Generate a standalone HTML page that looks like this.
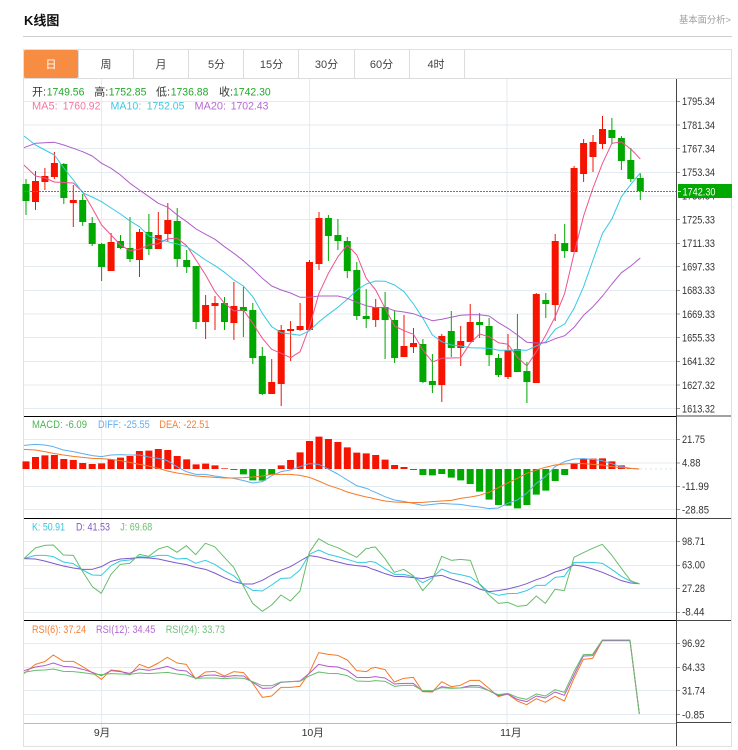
<!DOCTYPE html>
<html lang="zh">
<head>
<meta charset="utf-8">
<title>K线图</title>
<style>
html,body{margin:0;padding:0;background:#fff;width:738px;height:750px;overflow:hidden}
svg{display:block;font-family:"Liberation Sans","Noto Sans CJK SC",sans-serif}
polyline{fill:none;stroke-width:1;vector-effect:non-scaling-stroke;stroke-linejoin:round}
.ax text{font-size:11px;fill:#333}
.lg{font-size:11px}
.tab{font-size:11px;fill:#444;text-anchor:middle}
</style>
</head>
<body>
<svg width="738" height="750" viewBox="0 0 738 750" xmlns="http://www.w3.org/2000/svg">
<rect width="738" height="750" fill="#fff"/>
<text x="24" y="25" font-size="13" font-weight="bold" fill="#111">K线图</text>
<text x="679" y="23" font-size="9.5" fill="#a0a0a0" textLength="52" lengthAdjust="spacingAndGlyphs">基本面分析&gt;</text>
<path d="M23 36.5H732" stroke="#cfcfcf" fill="none"/>

<!-- frame -->
<rect x="23.5" y="49.5" width="708" height="697" fill="none" stroke="#e0e0e0"/>
<rect x="24" y="50" width="54" height="28" rx="1.5" fill="#f68d42"/>
<path d="M24 78.5H731.5M78.5 50V78M133.5 50V78M188.5 50V78M243.5 50V78M298.5 50V78M354.5 50V78M409.5 50V78M464.5 50V78" stroke="#dcdcdc" fill="none"/>
<text class="tab" x="51" y="68" style="fill:#fff">日</text>
<text class="tab" x="106" y="68">周</text>
<text class="tab" x="161" y="68">月</text>
<text class="tab" x="216.5" y="68">5分</text>
<text class="tab" x="271.5" y="68">15分</text>
<text class="tab" x="326.5" y="68">30分</text>
<text class="tab" x="381.5" y="68">60分</text>
<text class="tab" x="436" y="68">4时</text>

<!-- grid -->
<path stroke="#e4ebf1" fill="none" d="M24 101.5H676M24 125H676M24 148.5H676M24 172.5H676M24 196H676M24 219.5H676M24 243.5H676M24 266.5H676M24 290.5H676M24 314H676M24 337.5H676M24 361.5H676M24 385H676M24 408.5H676
M24 439.5H676M24 463H676M24 486.5H676M24 509.5H676
M24 541.5H676M24 565.5H676M24 588.5H676M24 612.5H676
M24 643.5H676M24 667.5H676M24 690.5H676M24 714.5H676
M101.5 79V727M309.5 79V727M507 79V727"/>

<!-- candles: wicks -->
<path stroke="#00a800" stroke-width="1" fill="none" d="M26 179V215M63.8 163V204M82.7 194V226M92.2 217V246M101.6 243V281M120.5 235V249M130 217V262M148.9 214V255M177.2 208V267M186.7 250V273M196.1 266V329M224.5 297V330M243.4 287V337M252.8 303V364M262.3 347V395M328.4 215V261M337.9 219V250M347.3 237V278M356.8 262V320M366.2 289V328M385.1 292V359M394.6 310V363M422.9 339V383M432.4 354V393M451.3 311V357M479.6 313V338M489.1 318V366M498.5 354V377M517.4 314V372M526.9 362V403M545.8 293V318M564.7 224V258M611.9 118V144M621.4 136V170M630.8 148V182M640.3 173V200"/>
<path stroke="#f61400" stroke-width="1" fill="none" d="M35.5 171V210M44.9 168V190M54.4 152V179M73.3 185V227M111.1 233V271M139.5 229V277M158.3 212V249M167.8 203V242M205.6 295V339M215 296V330M233.9 282V340M271.7 359V394M281.2 325V406M290.6 321V361M300.1 303V331M309.5 260V330M319 212V270M375.7 299V327M404 315V357M413.5 328V353M441.8 334V402M460.7 326V366M470.2 304V342M508 334V379M536.3 293V383M555.2 234V321M574.1 166V252M583.6 139V182M593 135V172M602.5 116V149"/>
<!-- candles: bodies -->
<path fill="#00a800" d="M22.5 184h7V201h-7zM60.3 164h7V198h-7zM79.2 200h7V222h-7zM88.7 223h7V244h-7zM98.1 244h7V267h-7zM117 241h7V248h-7zM126.5 248h7V259h-7zM145.4 232h7V249h-7zM173.7 221h7V259h-7zM183.2 260h7V267h-7zM192.6 266h7V322h-7zM221 303h7V322h-7zM239.9 307h7V311h-7zM249.3 310h7V358h-7zM258.8 356h7V394h-7zM324.9 218h7V236h-7zM334.4 235h7V241h-7zM343.8 241h7V271h-7zM353.3 270h7V316h-7zM362.7 316h7V319h-7zM381.6 307h7V320h-7zM391.1 320h7V358h-7zM419.4 344h7V382h-7zM428.9 381h7V385h-7zM447.8 331h7V348h-7zM476.1 322h7V325h-7zM485.6 326h7V355h-7zM495 358h7V375h-7zM513.9 349h7V372h-7zM523.4 371h7V382h-7zM542.3 300h7V304h-7zM561.2 243h7V251h-7zM608.4 130h7V138h-7zM617.9 138h7V161h-7zM627.3 160h7V179h-7zM636.8 178h7V191h-7z"/>
<path fill="#f61400" d="M32 181h7V202h-7zM41.4 176h7V182h-7zM50.9 163h7V177h-7zM69.8 200h7V203h-7zM107.6 242h7V271h-7zM136 232h7V260h-7zM154.8 235h7V249h-7zM164.3 220h7V234h-7zM202.1 305h7V322h-7zM211.5 303h7V306h-7zM230.4 306h7V323h-7zM268.2 382h7V394h-7zM277.7 330h7V384h-7zM287.1 329h7V331h-7zM296.6 326h7V330h-7zM306 262h7V330h-7zM315.5 218h7V264h-7zM372.2 307h7V320h-7zM400.5 346h7V357h-7zM410 343h7V347h-7zM438.3 336h7V385h-7zM457.2 341h7V348h-7zM466.7 322h7V342h-7zM504.5 350h7V377h-7zM532.8 294h7V383h-7zM551.7 241h7V305h-7zM570.6 168h7V252h-7zM580.1 143h7V174h-7zM589.5 142h7V157h-7zM599 129h7V144h-7z"/>

<!-- MA lines -->
<polyline stroke="#f0528f" points="24,165 26,167 35.5,176 44.9,178 54.4,182 63.8,182.5 73.3,183 82.7,192 92.2,208 101.6,225 111.1,235 120.5,245 130,250.7 139.4,249.3 148.9,245 158.3,243.7 167.8,238.7 177.2,238.3 186.7,245.7 196.1,260 205.6,275 215,291.7 224.5,303.3 233.9,311 243.4,310 252.8,323.3 262.3,338.3 271.7,349.3 281.2,353.3 290.6,357.7 300.1,351.7 309.5,326.7 319,293.3 328.4,273.3 337.9,256.7 347.3,245 356.8,255 366.2,278.3 375.7,290 385.1,308.3 394.6,326 404,330.7 413.5,334.3 422.9,350 432.4,362 441.8,358.3 451.3,358 460.7,357.7 470.2,343.3 479.6,334 489.1,336.7 498.5,342.7 508,344.3 517.4,357.3 526.9,366 536.3,351.7 545.8,335 555.2,316.7 564.7,293.3 574.1,253.3 583.6,216 593,188 602.5,163.3 611.9,143.3 621.4,142 630.8,149 640.3,159"/>
<polyline stroke="#36c9e2" points="24,136 35.5,145 44.9,150 54.4,155 63.8,168 73.3,180 82.7,192.7 92.2,197 101.6,201.7 111.1,208 120.5,214 130,221 139.4,226.7 148.9,236 158.3,239.3 167.8,241.7 177.2,244 186.7,246.7 196.1,253.3 205.6,260 215,265.7 224.5,272.3 233.9,280 243.4,286 252.8,296.7 262.3,313.3 271.7,326.7 281.2,332.7 290.6,334 300.1,335.3 309.5,330.7 319,321.7 328.4,314.3 337.9,307.3 347.3,299.3 356.8,290 366.2,284 375.7,281 385.1,281.3 394.6,285 404,291.7 413.5,304 422.9,318.3 432.4,335 441.8,341.7 451.3,345 460.7,346 470.2,347.7 479.6,348 489.1,348.3 498.5,350.3 508,350.3 517.4,350 526.9,350.3 536.3,346 545.8,341.7 555.2,329.3 564.7,324 574.1,308.3 583.6,286.7 593,260 602.5,233.3 611.9,219 621.4,196.7 630.8,184.3 640.3,173"/>
<polyline stroke="#b05ccb" points="24,147.7 35.5,143.3 44.9,142.7 54.4,142.3 63.8,145 73.3,148.3 82.7,151.7 92.2,156 101.6,163.3 111.1,168.3 120.5,175 130,183.3 139.4,190 148.9,196.7 158.3,203.3 167.8,207.3 177.2,215 186.7,221.7 196.1,229 205.6,234.3 215,239.3 224.5,246.7 233.9,253.3 243.4,260.7 252.8,269 262.3,278.3 271.7,286 281.2,290 290.6,293 300.1,297.3 309.5,297.3 319,296 328.4,296 337.9,296 347.3,298.3 356.8,302.3 366.2,305.7 375.7,307.7 385.1,307.3 394.6,310.7 404,312 413.5,313.7 422.9,317.3 432.4,320.7 441.8,319.3 451.3,317.3 460.7,315.3 470.2,314.7 479.6,314.7 489.1,316 498.5,322.7 508,328.3 517.4,335 526.9,342.3 536.3,343 545.8,342.7 555.2,338.7 564.7,335.7 574.1,327.3 583.6,315.3 593,306.7 602.5,296 611.9,284 621.4,272.7 630.8,266 640.3,258"/>

<!-- current price line -->
<path d="M24 191.5H676" stroke="#2fa82f" stroke-dasharray="2 1" fill="none"/>

<!-- legends main -->
<g class="lg" fill="#333">
<text x="32" y="95.5" font-size="11">开:</text>
<text x="94.3" y="95.5" font-size="11">高:</text>
<text x="156" y="95.5" font-size="11">低:</text>
<text x="219" y="95.5" font-size="11">收:</text>
</g>
<g class="lg" fill="#22a82a">
<text x="46.7" y="95.5" textLength="37.7" lengthAdjust="spacingAndGlyphs">1749.56</text>
<text x="108.7" y="95.5" textLength="37.7" lengthAdjust="spacingAndGlyphs">1752.85</text>
<text x="170.7" y="95.5" textLength="37.7" lengthAdjust="spacingAndGlyphs">1736.88</text>
<text x="233" y="95.5" textLength="37.7" lengthAdjust="spacingAndGlyphs">1742.30</text>
</g>
<g class="lg">
<text x="32" y="109.5" fill="#f5759f" textLength="25.7" lengthAdjust="spacingAndGlyphs">MA5:</text>
<text x="62.7" y="109.5" fill="#f5759f" textLength="37.7" lengthAdjust="spacingAndGlyphs">1760.92</text>
<text x="110.5" y="109.5" fill="#3cc8e2" textLength="30.8" lengthAdjust="spacingAndGlyphs">MA10:</text>
<text x="146.7" y="109.5" fill="#3cc8e2" textLength="37.7" lengthAdjust="spacingAndGlyphs">1752.05</text>
<text x="194.5" y="109.5" fill="#b669d2" textLength="31.5" lengthAdjust="spacingAndGlyphs">MA20:</text>
<text x="230.7" y="109.5" fill="#b669d2" textLength="37.7" lengthAdjust="spacingAndGlyphs">1702.43</text>
</g>

<!-- MACD bars -->
<g transform="translate(0,415) scale(1,.33333)">
<path fill="#f61400" d="M22.5 139h7V162h-7zM32 126h7V162h-7zM41.4 121h7V162h-7zM50.9 120h7V162h-7zM60.3 132h7V162h-7zM69.8 135h7V162h-7zM79.2 144h7V162h-7zM88.7 147h7V162h-7zM98.1 145h7V162h-7zM107.6 133h7V162h-7zM117 128h7V162h-7zM126.5 123h7V162h-7zM135.9 108h7V162h-7zM145.4 107h7V162h-7zM154.8 102h7V162h-7zM164.3 105h7V162h-7zM173.7 123h7V162h-7zM183.2 133h7V162h-7zM192.6 148h7V162h-7zM202.1 146h7V162h-7zM211.5 151h7V162h-7zM221 160h7V162h-7zM277.7 151h7V162h-7zM287.1 135h7V162h-7zM296.6 112h7V162h-7zM306 78h7V162h-7zM315.5 65h7V162h-7zM324.9 72h7V162h-7zM334.4 81h7V162h-7zM343.8 97h7V162h-7zM353.3 113h7V162h-7zM362.7 115h7V162h-7zM372.2 120h7V162h-7zM381.6 134h7V162h-7zM391.1 150h7V162h-7zM400.5 156h7V162h-7zM570.6 144h7V162h-7zM580.1 132h7V162h-7zM589.5 131h7V162h-7zM599 130h7V162h-7zM608.4 139h7V162h-7zM617.9 151h7V162h-7zM627.3 159h7V162h-7z"/>
<path fill="#00a800" d="M230.4 162h7V165h-7zM239.9 162h7V178h-7zM249.3 162h7V196h-7zM258.8 162h7V197h-7zM268.2 162h7V179h-7zM410 162h7V165h-7zM419.4 162h7V180h-7zM428.9 162h7V181h-7zM438.3 162h7V177h-7zM447.8 162h7V188h-7zM457.2 162h7V196h-7zM466.7 162h7V207h-7zM476.1 162h7V230h-7zM485.6 162h7V254h-7zM495 162h7V270h-7zM504.5 162h7V272h-7zM513.9 162h7V280h-7zM523.4 162h7V270h-7zM532.8 162h7V239h-7zM542.3 162h7V227h-7zM551.7 162h7V198h-7zM561.2 162h7V180h-7z"/>
</g>
<path d="M640 469H676" stroke="#cfe6f2" stroke-dasharray="2 3" fill="none"/>

<g transform="translate(0,415) scale(.33333)">
<polyline stroke="#5dafef" points="72,91 106,88 134,90 160,95 190,105 220,110 248,116 277,122 304,125 333,120 361,119 389,120 418,120 446,126 475,130 502,137 531,155 559,170 587,178 616,178 644,183 673,187 701,190 731,197 758,204 787,200 815,182 843,170 871,165 900,155 928,146 956,148 985,162 1013,177 1042,195 1070,212 1099,220 1110,224"/>
<polyline stroke="#f57a28" points="72,103 106,105 134,110 160,115 190,120 220,124 248,127 277,130 304,131 333,133 361,137 389,142 418,148 446,153 475,160 502,168 531,174 559,178 587,183 616,185 644,187 673,189 701,189 731,188 758,186 787,183 815,178 843,178 871,178 900,181 928,187 956,198 985,211 1013,220 1042,231 1070,239 1099,246 1110,248"/>
</g>
<g transform="translate(370,415) scale(.33333)">
<polyline stroke="#5dafef" points="0,226 16,232 45,245 73,255 101,259 130,265 158,271 187,268 215,265 244,267 271,268 301,273 328,276 357,281 385,279 413,265 442,255 470,235 499,205 526,185 555,155 583,140 612,132 640,131 668,133 697,137 725,146 754,155 782,160 808,162"/>
<polyline stroke="#f57a28" points="0,248 16,252 45,258 73,261 101,262 130,263 158,262 187,260 215,258 244,256 271,250 301,246 328,241 357,232 385,218 413,204 442,190 470,175 499,165 526,157 555,150 583,147 612,145 640,146 668,148 697,150 725,155 754,158 782,160 808,162"/>
</g>

<!-- KDJ -->
<g transform="translate(0,515) scale(.33333)">
<polyline stroke="#36c9e2" points="72,131 106,121 134,121 160,125 190,141 220,146 248,165 277,180 304,181 333,152 361,138 389,135 418,125 446,127 475,121 502,121 531,132 559,130 587,145 616,136 644,148 673,167 701,182 731,210 758,226 787,228 815,210 843,190 871,189 900,165 928,118 956,105 985,118 1013,125 1042,133 1070,142 1099,142 1110,139"/>
<polyline stroke="#7d59c9" points="72,131 106,132 134,138 160,145 190,153 220,159 248,163 277,163 304,155 333,139 361,132 389,130 418,128 446,129 475,132 502,138 531,144 559,149 587,157 616,163 644,174 673,188 701,200 731,207 758,207 787,196 815,180 843,166 871,155 900,138 928,122 956,126 985,134 1013,141 1042,148 1070,152 1099,155 1110,159"/>
<polyline stroke="#68bd6c" points="72,131 106,99 134,91 160,90 190,120 220,121 248,170 277,215 304,235 333,178 361,148 389,145 418,118 446,124 475,102 502,94 531,112 559,92 587,119 616,85 644,95 673,127 701,157 731,215 758,265 787,289 815,270 843,240 871,258 900,228 928,112 956,71 985,88 1013,98 1042,113 1070,127 1099,100 1110,100"/>
</g>
<g transform="translate(370,515) scale(.33333)">
<polyline stroke="#36c9e2" points="0,139 16,142 45,161 73,178 101,178 130,185 158,203 187,188 215,162 244,174 271,179 301,186 328,206 357,232 385,241 413,236 442,235 470,227 499,211 526,211 555,187 583,184 612,142 640,142 668,142 697,145 725,163 754,184 782,199 808,206"/>
<polyline stroke="#7d59c9" points="0,160 16,165 45,176 73,184 101,185 130,188 158,191 187,184 215,181 244,192 271,200 301,209 328,222 357,230 385,227 413,222 442,215 470,206 499,194 526,185 555,171 583,163 612,150 640,154 668,162 697,172 725,184 754,197 782,204 808,206"/>
<polyline stroke="#68bd6c" points="0,98 16,96 45,131 73,172 101,163 130,182 158,227 187,194 215,124 244,136 271,133 301,136 328,207 357,240 385,265 413,262 442,274 470,271 499,243 526,265 555,223 583,227 612,127 640,113 668,100 697,88 725,120 754,160 782,197 808,207"/>
</g>

<!-- RSI -->
<g transform="translate(0,620) scale(.33333)">
<polyline stroke="#f57a28" points="72,161 106,133 134,125 160,105 190,124 220,124 248,140 277,158 304,178 333,150 361,153 389,165 418,133 446,144 475,129 502,112 531,129 559,133 587,177 616,156 644,154 673,168 701,155 731,158 758,190 787,232 815,228 843,202 871,202 900,199 928,158 956,98 985,103 1013,106 1042,120 1070,152 1099,155 1110,148"/>
<polyline stroke="#b05ccb" points="72,152 106,141 134,137 160,129 190,139 220,141 248,148 277,157 304,167 333,152 361,155 389,160 418,147 446,151 475,146 502,139 531,150 559,153 587,175 616,166 644,165 673,171 701,167 731,168 758,187 787,205 815,204 843,187 871,185 900,183 928,160 956,133 985,139 1013,141 1042,151 1070,172 1099,173 1110,172"/>
<polyline stroke="#68bd6c" points="72,157 106,151 134,150 160,147 190,154 220,155 248,158 277,162 304,164 333,161 361,162 389,163 418,159 446,161 475,159 502,157 531,162 559,165 587,175 616,174 644,174 673,176 701,174 731,175 758,185 787,197 815,197 843,186 871,185 900,184 928,168 956,156 985,160 1013,161 1042,167 1070,183 1099,184 1110,184"/>
</g>
<g transform="translate(370,620) scale(.33333)">
<polyline stroke="#f57a28" points="0,146 16,142 45,149 73,186 101,175 130,172 158,215 187,216 215,185 244,200 271,196 301,181 328,181 357,205 385,230 413,222 442,243 470,254 499,236 526,247 555,229 583,243 612,175 640,118 668,115 697,62 725,62 754,62 780,62 808,281"/>
<polyline stroke="#b05ccb" points="0,172 16,170 45,174 73,192 101,190 130,190 158,214 187,214 215,200 244,204 271,204 301,197 328,197 357,212 385,227 413,222 442,238 470,245 499,228 526,234 555,216 583,226 612,165 640,108 668,107 697,62 725,62 754,62 780,62 808,281"/>
<polyline stroke="#68bd6c" points="0,184 16,182 45,184 73,199 101,196 130,196 158,212 187,212 215,203 244,205 271,204 301,201 328,202 357,212 385,224 413,220 442,232 470,238 499,222 526,228 555,209 583,217 612,155 640,104 668,103 697,60 725,60 754,60 780,60 808,281"/>
</g>

<!-- panel legends -->
<g class="lg">
<text x="32" y="428" fill="#4cb454" textLength="55" lengthAdjust="spacingAndGlyphs">MACD: -6.09</text>
<text x="98" y="428" fill="#60aef0" textLength="51.7" lengthAdjust="spacingAndGlyphs">DIFF: -25.55</text>
<text x="159.3" y="428" fill="#f5813a" textLength="50.2" lengthAdjust="spacingAndGlyphs">DEA: -22.51</text>
<text x="32" y="530.5" fill="#36c5df" textLength="33" lengthAdjust="spacingAndGlyphs">K: 50.91</text>
<text x="76" y="530.5" fill="#7d59c9" textLength="34" lengthAdjust="spacingAndGlyphs">D: 41.53</text>
<text x="120.3" y="530.5" fill="#6cc070" textLength="32" lengthAdjust="spacingAndGlyphs">J: 69.68</text>
<text x="32" y="633" fill="#f5813a" textLength="54" lengthAdjust="spacingAndGlyphs">RSI(6): 37.24</text>
<text x="96" y="633" fill="#b669d2" textLength="59.3" lengthAdjust="spacingAndGlyphs">RSI(12): 34.45</text>
<text x="165.7" y="633" fill="#72c27a" textLength="59.3" lengthAdjust="spacingAndGlyphs">RSI(24): 33.73</text>
</g>

<!-- separators and axis -->
<path stroke="#000" fill="none" d="M24 416.5H676M24 518.5H676M24 620.5H676"/>
<path stroke="#bbb" fill="none" d="M24 723.5H676"/>
<path stroke="#444" fill="none" d="M676.5 79V746M677 416H731M677 518.5H731M677 620.5H731M677 722.5H731"/>
<path stroke="#999" fill="none" d="M677 101.5h3M677 125h3M677 148.5h3M677 172.5h3M677 219.5h3M677 243.5h3M677 266.5h3M677 290.5h3M677 314h3M677 337.5h3M677 361.5h3M677 385h3M677 408.5h3M677 439.5h3M677 463h3M677 486.5h3M677 509.5h3M677 541.5h3M677 565.5h3M677 588.5h3M677 612.5h3M677 643.5h3M677 667.5h3M677 690.5h3M677 714.5h3"/>

<g class="ax">
<text x="682" y="105" textLength="33" lengthAdjust="spacingAndGlyphs">1795.34</text>
<text x="682" y="129" textLength="33" lengthAdjust="spacingAndGlyphs">1781.34</text>
<text x="682" y="152.5" textLength="33" lengthAdjust="spacingAndGlyphs">1767.34</text>
<text x="682" y="176" textLength="33" lengthAdjust="spacingAndGlyphs">1753.34</text>
<text x="682" y="199.5" textLength="33" lengthAdjust="spacingAndGlyphs">1739.34</text>
<text x="682" y="223.5" textLength="33" lengthAdjust="spacingAndGlyphs">1725.33</text>
<text x="682" y="247" textLength="33" lengthAdjust="spacingAndGlyphs">1711.33</text>
<text x="682" y="270.5" textLength="33" lengthAdjust="spacingAndGlyphs">1697.33</text>
<text x="682" y="294" textLength="33" lengthAdjust="spacingAndGlyphs">1683.33</text>
<text x="682" y="318" textLength="33" lengthAdjust="spacingAndGlyphs">1669.33</text>
<text x="682" y="341.5" textLength="33" lengthAdjust="spacingAndGlyphs">1655.33</text>
<text x="682" y="365" textLength="33" lengthAdjust="spacingAndGlyphs">1641.32</text>
<text x="682" y="389" textLength="33" lengthAdjust="spacingAndGlyphs">1627.32</text>
<text x="682" y="412.5" textLength="33" lengthAdjust="spacingAndGlyphs">1613.32</text>
<text x="682" y="443" textLength="23" lengthAdjust="spacingAndGlyphs">21.75</text>
<text x="682" y="466.5" textLength="18.5" lengthAdjust="spacingAndGlyphs">4.88</text>
<text x="682" y="490" textLength="27" lengthAdjust="spacingAndGlyphs">-11.99</text>
<text x="682" y="513.5" textLength="27" lengthAdjust="spacingAndGlyphs">-28.85</text>
<text x="682" y="545" textLength="23" lengthAdjust="spacingAndGlyphs">98.71</text>
<text x="682" y="568.5" textLength="23" lengthAdjust="spacingAndGlyphs">63.00</text>
<text x="682" y="592" textLength="23" lengthAdjust="spacingAndGlyphs">27.28</text>
<text x="682" y="615.5" textLength="22.5" lengthAdjust="spacingAndGlyphs">-8.44</text>
<text x="682" y="647" textLength="23" lengthAdjust="spacingAndGlyphs">96.92</text>
<text x="682" y="671" textLength="23" lengthAdjust="spacingAndGlyphs">64.33</text>
<text x="682" y="694.5" textLength="23" lengthAdjust="spacingAndGlyphs">31.74</text>
<text x="682" y="718.5" textLength="22.5" lengthAdjust="spacingAndGlyphs">-0.85</text>
</g>

<!-- price tag -->
<rect x="678" y="184" width="54" height="14" fill="#00a800"/>
<path d="M678 191.5h3" stroke="#fff" fill="none"/>
<text x="682.5" y="195.5" font-size="11" fill="#fff" textLength="33" lengthAdjust="spacingAndGlyphs">1742.30</text>

<!-- x axis -->
<text x="102" y="736" font-size="10.5" fill="#333" text-anchor="middle">9月</text>
<text x="312.7" y="736" font-size="10.5" fill="#333" text-anchor="middle">10月</text>
<text x="510.8" y="736" font-size="10.5" fill="#333" text-anchor="middle">11月</text>
</svg>
</body>
</html>
